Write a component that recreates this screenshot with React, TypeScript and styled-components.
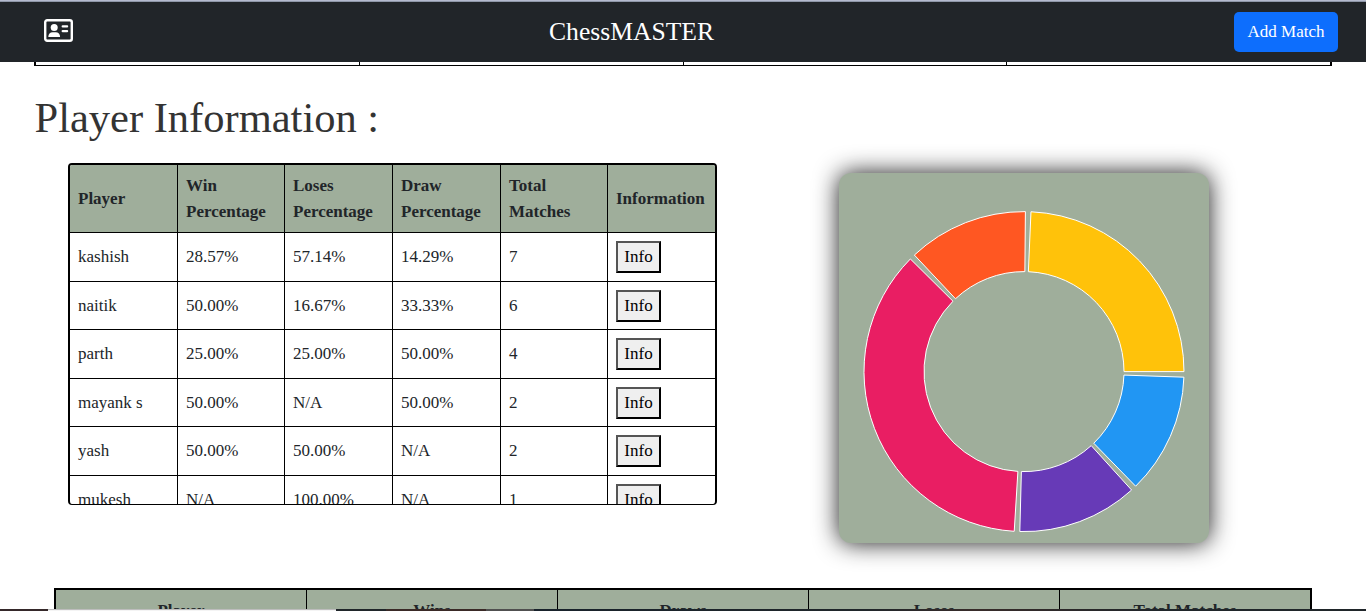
import React from "react";
import styled, { createGlobalStyle } from "styled-components";

const GlobalStyle = createGlobalStyle`
  *, *::before, *::after { box-sizing: border-box; }
  html, body { margin: 0; padding: 0; overflow: hidden; }
  body {
    background: #fff;
    color: #212529;
    font: 400 16px/1.5 "Liberation Serif", "Times New Roman", serif;
  }
`;

const Page = styled.div`
  height: 611px;
  display: flex;
  flex-direction: column;
  overflow: hidden;
`;

const TopEdge = styled.div`
  flex: none;
  height: 2px;
  background: linear-gradient(#b4bace 50%, #8f97a8 50%);
`;

const Navbar = styled.header`
  flex: none;
  height: 60px;
  padding: 0 28px 0 44px;
  display: flex;
  justify-content: space-between;
  align-items: center;
  background: #212529;
  color: #fff;
`;

const Brand = styled.h1`
  margin: 0 44px 0 0;
  font-size: 25.6px;
  font-weight: 400;
  line-height: 38px;
  text-align: center;
`;

const NavIcon = styled.svg`
  display: block;
  width: 29px;
  height: 23px;
  margin-top: -3px;
`;

const AddButton = styled.button`
  width: 104px;
  height: 40px;
  padding: 0;
  border: 0;
  border-radius: 5px;
  background: #0d6efd;
  color: #fff;
  font: inherit;
  font-size: 17px;
`;

const PreviousTable = styled.div`
  flex: none;
  height: 4px;
  width: 1298px;
  margin-left: 34px;
  display: grid;
  grid-template-columns: 323px 324px 323px 1fr;
  border: solid #000;
  border-width: 0 2px 1px;
`;

const PreviousCell = styled.div`
  & + & { border-left: 1px solid #000; }
`;

const Title = styled.h2`
  flex: none;
  margin: 26px 0 0 34.5px;
  font-size: 42.5px;
  font-weight: 400;
  line-height: 52px;
  color: #333;
`;

const Content = styled.section`
  flex: none;
  height: 444px;
  padding-left: 68px;
  display: flex;
  align-items: flex-start;
  gap: 122px;
`;

const TableFrame = styled.div`
  width: 649px;
  height: 342px;
  margin-top: 19px;
  border: solid #000;
  border-width: 2px 2px 1px;
  border-radius: 4px;
  overflow: hidden;
`;

const PlayerTable = styled.table`
  width: 646px;
  border-collapse: separate;
  border-spacing: 0;
  table-layout: fixed;
`;

const HeadCell = styled.th`
  height: 68px;
  padding: 8px 0 7px 8px;
  border-bottom: 1px solid #000;
  background: #9fae9b;
  text-align: left;
  vertical-align: middle;
  font-size: 17px;
  line-height: 26px;
  & + & { border-left: 1px solid #000; }
`;

const Cell = styled.td`
  height: 48.55px;
  padding: 0.6px 0 0 8px;
  border-bottom: 1px solid #000;
  vertical-align: middle;
  font-size: 17px;
  line-height: 26px;
  & + & { border-left: 1px solid #000; }
`;

const InfoButton = styled.button`
  display: block;
  width: 45px;
  height: 32px;
  padding: 0;
  border: 2px solid;
  border-color: #555 #000 #000 #555;
  background: #efefef;
  color: #000;
  font: inherit;
  line-height: 26px;
`;

const ChartCard = styled.div`
  width: 370px;
  height: 370px;
  margin-top: 29px;
  border-radius: 12px;
  background: #9fae9b;
  box-shadow: 0 0 24px rgba(0, 0, 0, 0.9);
`;

const Chart = styled.svg`
  display: block;
`;

const SummaryTable = styled.div`
  flex: none;
  width: 1258px;
  height: 60px;
  margin-left: 54px;
  display: grid;
  grid-template-columns: 250px repeat(4, 251px);
  border: 2px solid #000;
  background: #9fae9b;
`;

const SummaryCell = styled.div`
  padding-top: 8px;
  text-align: center;
  font-size: 17px;
  font-weight: 700;
  line-height: 26px;
  & + & { border-left: 1px solid #000; }
`;

const BottomEdge = styled.div`
  position: absolute;
  top: 609px;
  left: 0;
  width: 1366px;
  height: 2px;
  display: flex;
  background: #20262a;
`;

const EdgePart = styled.div<{ $width: number; $fill: string }>`
  width: ${(p) => p.$width}px;
  background: ${(p) => p.$fill};
`;

const headings = ["Player", "Win Percentage", "Loses Percentage", "Draw Percentage", "Total Matches", "Information"];
const columnWidths = [107, 107, 108, 108, 107, 109];

const players = [
  ["kashish", "28.57%", "57.14%", "14.29%", "7"],
  ["naitik", "50.00%", "16.67%", "33.33%", "6"],
  ["parth", "25.00%", "25.00%", "50.00%", "4"],
  ["mayank s", "50.00%", "N/A", "50.00%", "2"],
  ["yash", "50.00%", "50.00%", "N/A", "2"],
  ["mukesh", "N/A", "100.00%", "N/A", "1"],
];

const slices = [
  { value: 2, color: "#ffc20a" },
  { value: 1, color: "#ff5722" },
  { value: 3, color: "#e91e63" },
  { value: 1, color: "#673ab7" },
  { value: 1, color: "#2196f3" },
];

const CENTER = { x: 185, y: 198.6 };
const INNER = 100;
const OUTER = 160;
const GAP = 2;

const point = (radius: number, angle: number) => {
  const rad = (angle * Math.PI) / 180;
  return `${CENTER.x + radius * Math.cos(rad)} ${CENTER.y - radius * Math.sin(rad)}`;
};

const ringPath = (start: number, end: number) =>
  `M${point(OUTER, start)} A${OUTER} ${OUTER} 0 0 0 ${point(OUTER, end)} ` +
  `L${point(INNER, end)} A${INNER} ${INNER} 0 0 1 ${point(INNER, start)} Z`;

function DonutChart() {
  const total = slices.reduce((sum, s) => sum + s.value, 0);
  const available = 360 - GAP * slices.length;
  let angle = 0;
  return (
    <Chart width={370} height={370} viewBox="0 0 370 370">
      {slices.map((s) => {
        const start = angle;
        const end = start + (available * s.value) / total;
        angle = end + GAP;
        return <path key={s.color} d={ringPath(start, end)} fill={s.color} stroke="#fff" />;
      })}
    </Chart>
  );
}

export default function App() {
  return (
    <>
      <GlobalStyle />
      <Page>
        <TopEdge />
        <Navbar>
          <NavIcon viewBox="0 0 29 23" fill="#fff">
            <rect x="1.2" y="1.2" width="26.6" height="20.6" rx="2" fill="none" stroke="#fff" strokeWidth="2.4" />
            <circle cx="10.2" cy="8.5" r="3.5" />
            <path d="M4.3 18c0-2.900 1.800-4.700 4.300-4.700h3.200c2.500 0 4.300 1.800 4.300 4.700z" />
            <rect x="17.600" y="6.200" width="6.600" height="2.400" rx="1.100" />
            <rect x="17.600" y="10.900" width="6.600" height="2.400" rx="1.100" />
          </NavIcon>
          <Brand>ChessMASTER</Brand>
          <AddButton>Add Match</AddButton>
        </Navbar>
        <PreviousTable>
          <PreviousCell />
          <PreviousCell />
          <PreviousCell />
          <PreviousCell />
        </PreviousTable>
        <Title>Player Information :</Title>
        <Content>
          <TableFrame>
            <PlayerTable>
              <colgroup>
                {columnWidths.map((w, i) => (
                  <col key={i} width={w} />
                ))}
              </colgroup>
              <thead>
                <tr>
                  {headings.map((h) => (
                    <HeadCell key={h}>{h}</HeadCell>
                  ))}
                </tr>
              </thead>
              <tbody>
                {players.map((row) => (
                  <tr key={row[0]}>
                    {row.map((value, i) => (
                      <Cell key={i}>{value}</Cell>
                    ))}
                    <Cell>
                      <InfoButton>Info</InfoButton>
                    </Cell>
                  </tr>
                ))}
              </tbody>
            </PlayerTable>
          </TableFrame>
          <ChartCard>
            <DonutChart />
          </ChartCard>
        </Content>
        <SummaryTable>
          {["Player", "Wins", "Draws", "Loses", "Total Matches"].map((h) => (
            <SummaryCell key={h}>{h}</SummaryCell>
          ))}
        </SummaryTable>
        <BottomEdge>
          <EdgePart $width={48} $fill="#35282a" />
          <EdgePart $width={288} $fill="linear-gradient(#bdbdbd 50%, #f4f4f4 50%)" />
          <EdgePart $width={50} $fill="#20262a" />
          <EdgePart $width={100} $fill="#3a2a27" />
          <EdgePart $width={48} $fill="#505050" />
          <EdgePart $width={832} $fill="linear-gradient(90deg, #18222b, #20262a 40%, #382c2a 53%, #20262a 75%)" />
        </BottomEdge>
      </Page>
    </>
  );
}
